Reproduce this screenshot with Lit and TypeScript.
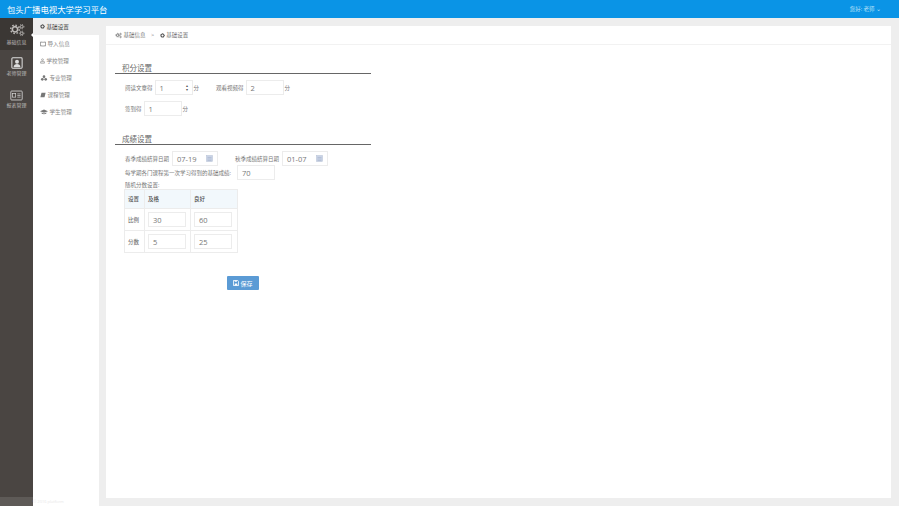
import { LitElement, html, css, svg } from "lit";
import { customElement } from "lit/decorators.js";

const gear = (s: number, c: string) => svg`<svg width=${s} height=${s} viewBox="0 0 16 16"><circle cx="8" cy="8" r="4.6" fill="none" stroke=${c} stroke-width="3"/><circle cx="8" cy="8" r="6.4" fill="none" stroke=${c} stroke-width="1.8" stroke-dasharray="2.5 2.5"/></svg>`;
const gears = (s: number, c: string) => svg`<svg width=${s} height=${s} viewBox="0 0 24 20"><g fill="none" stroke=${c}><circle cx="9" cy="9" r="4" stroke-width="2.4"/><circle cx="9" cy="9" r="6.4" stroke-width="2" stroke-dasharray="2.4 2.6"/><circle cx="19" cy="5" r="2" stroke-width="1.4"/><circle cx="19" cy="5" r="3.4" stroke-width="1.2" stroke-dasharray="1.5 1.5"/><circle cx="19" cy="15" r="2" stroke-width="1.4"/><circle cx="19" cy="15" r="3.4" stroke-width="1.2" stroke-dasharray="1.5 1.5"/></g></svg>`;
const c = "#777";
const menuIcons = [
  gear(5, "#333"),
  svg`<svg width="6" height="6" viewBox="0 0 16 16"><path d="M1 3h6l1 1 1-1h6v10H9l-1 1-1-1H1z" fill="none" stroke=${c} stroke-width="2"/></svg>`,
  svg`<svg width="5" height="6" viewBox="0 0 16 16"><path d="M8 1a3 3 0 1 1 0 6 3 3 0 0 1 0-6zM2 15V10h12v5z" fill="none" stroke=${c} stroke-width="1.800"/></svg>`,
  svg`<svg width="8" height="6" viewBox="0 0 18 16"><g fill=${c}><circle cx="9" cy="4.500" r="3.600"/><circle cx="4.500" cy="11.500" r="3.600"/><circle cx="13.500" cy="11.500" r="3.600"/></g></svg>`,
  svg`<svg width="6" height="6" viewBox="0 0 16 16"><path d="M4 2h11l-3 12H1z" fill=${c}/></svg>`,
  svg`<svg width="8" height="6" viewBox="0 0 20 14"><path d="M10 1 20 5 10 9 0 5z" fill=${c}/><path d="M4 8v3c3 2.500 9 2.500 12 0V8l-6 2.500z" fill=${c}/></svg>`,
];
const menu = ["基础设置", "导入信息", "学校管理", "专业管理", "课程管理", "学生管理"];
const cal = svg`<svg width="7" height="7" viewBox="0 0 14 14"><rect x="1" y="1" width="12" height="12" fill="#c9d3e6" stroke="#b4bfd3"/><path d="M3 5h8M3 8h8M3 11h8" stroke="#a0adc6"/></svg>`;

@customElement("app-root")
export class AppRoot extends LitElement {
  static styles = css`
    :host { display: block; width: 899px; height: 506px; overflow: hidden; position: relative; background: #eee; color: #777;
      font-family: "Open Sans", "Noto Sans CJK SC", sans-serif; font-size: 5.5px; }
    .top { height: 18px; background: #0a94e6; color: #fff; display: flex; align-items: center; justify-content: space-between; padding: 0 18px 0 7px; }
    .title { font-size: 8.4px; font-family: "Noto Sans CJK SC", sans-serif; }
    .user { font-size: 5.5px; color: #bfe2f8; }
    .body { display: flex; height: 488px; }
    .rail { width: 33px; background: #4a4542; color: #bdbab8; position: relative; }
    .ri { box-sizing: border-box; height: 33px; padding-bottom: 1px; display: flex; flex-direction: column; align-items: center; justify-content: center; gap: 1px; font-size: 5px; line-height: 6px; }
    .ri.on { background: #3b3734; height: 32px; }
    .ri.on::after { content: ""; position: absolute; right: 0; top: 15px; border: 2px solid transparent; border-right-color: #fff; }
    .side { width: 66px; background: #fff; }
    .mi { height: 17px; display: flex; align-items: center; gap: 1.500px; padding-left: 7px; font-size: 5.6px; color: #888; }
    .mi svg { flex: none; }
    .mi.on { background: #eee; color: #444; }
    .main { flex: 1; padding: 8px 8px 8px 7px; }
    .card { background: #fff; height: 472px; }
    .crumb { height: 18px; border-bottom: 1px solid #f2f2f2; display: flex; align-items: center; padding-left: 9px; gap: 1.500px; font-size: 5.500px; color: #777; line-height: 8px; }
    .sep { margin: 0 4px; }
    .form { padding: 0 0 0 9px; }
    .sec { width: 249px; border-bottom: 1px solid #666; height: 11px; padding-left: 7px; font-size: 7.500px; line-height: 13px; color: #666; }
    .s1 { margin-top: 17px; }
    .s2 { margin-top: 17px; }
    .row { display: flex; align-items: center; padding-left: 10px; }
    .lab { margin-right: 2px; white-space: nowrap; }
    .inp { box-sizing: border-box; width: 38px; height: 15px; border: 1px solid #ececec; display: flex; align-items: center; justify-content: space-between; padding: 0 4px; font-size: 7.500px; color: #777; flex: none; }
    .date { width: 46px; }
    .u { margin-left: 1px; }
    .spin { font-size: 4px; line-height: 4px; color: #555; display: flex; flex-direction: column; }
    .t { margin: 0 0 0 9px; border-collapse: collapse; table-layout: fixed; width: 113px; }
    .t td, .t th { border: 1px solid #ececec; padding: 0; font-weight: 500; text-align: left; font-size: 5.500px; }
    .t th { height: 18px; background: #f2f8fc; color: #555; padding-left: 3px; }
    .t td { height: 21px; padding-left: 3px; }
    .btn { margin: 23px 0 0 112px; width: 32px; height: 14px; background: #5b9bd5; color: #fff; font-size: 6px; display: flex; align-items: center; justify-content: center; gap: 1px; border-radius: 1px; }
    .foot { position: absolute; left: 0; bottom: 0; width: 33px; height: 9px; background: #5e5a57; }
    .foot2 { position: absolute; left: 33px; bottom: 0; height: 9px; line-height: 9px; font-size: 4px; color: #e8e8e8; }
  `;

  render() {
    return html`
      <div class="top"><span class="title">包头广播电视大学学习平台</span><span class="user">您好: 老师 ⌄</span></div>
      <div class="body">
        <div class="rail">
          <div class="ri on">${gears(16, "#bdbab8")}<span>基础信息</span></div>
          <div class="ri"><svg width="12" height="12" viewBox="0 0 14 14"><rect x="1" y="1" width="12" height="12" rx="1" fill="none" stroke="#ddd" stroke-width="1.200"/><circle cx="7" cy="5.500" r="2.300" fill="#ddd"/><path d="M3 12c0-5 8-5 8 0z" fill="#ddd"/></svg><span>老师管理</span></div>
          <div class="ri"><svg width="13" height="11" viewBox="0 0 16 13"><rect x="1" y="1" width="14" height="11" rx="1" fill="none" stroke="#ddd"/><rect x="3" y="4" width="4" height="4.500" fill="none" stroke="#ddd" stroke-width=".8"/><path d="M9 4.500h4M9 6.500h4M9 8.500h4" stroke="#ddd" stroke-width=".8"/></svg><span>报表管理</span></div>
          <div class="foot"></div>
        </div>
        <div class="side">
          ${menu.map((m, i) => html`<div class="mi ${i === 0 ? "on" : ""}">${menuIcons[i]}<span>${m}</span></div>`)}
        </div>
        <div class="main"><div class="card">
          <div class="crumb">${gears(7, "#555")}<span>基础信息</span><span class="sep">&gt;</span>${gear(5, "#333")}<span>基础设置</span></div>
          <div class="form">
            <div class="sec s1">积分设置</div>
            <div class="row" style="margin-top:6px">
              <span class="lab">阅读文章得</span><span class="inp"><span>1</span><span class="spin"><span>▴</span><span>▾</span></span></span><span class="u">分</span>
              <span class="lab" style="margin-left:17px">观看视频得</span><span class="inp"><span>2</span></span><span class="u">分</span>
            </div>
            <div class="row" style="margin-top:6px">
              <span class="lab">签到得</span><span class="inp"><span>1</span></span><span class="u">分</span>
            </div>
            <div class="sec s2">成绩设置</div>
            <div class="row" style="margin-top:6px">
              <span class="lab" style="margin-right:3px">春季成绩结算日期</span><span class="inp date"><span>07-19</span>${cal}</span>
              <span class="lab" style="margin-left:17px;margin-right:3px">秋季成绩结算日期</span><span class="inp date"><span>01-07</span>${cal}</span>
            </div>
            <div class="row" style="margin-top:-1px">
              <span class="lab" style="margin-right:6px">每学期各门课程第一次学习得到的基础成绩:</span><span class="inp"><span>70</span></span>
            </div>
            <div class="row" style="height:9px">随机分数设置:</div>
            <table class="t">
              <colgroup><col style="width:20px"/><col style="width:46px"/><col style="width:47px"/></colgroup>
              <tr><th>设置</th><th>及格</th><th>良好</th></tr>
              <tr><td>比例</td><td><span class="inp"><span>30</span></span></td><td><span class="inp"><span>60</span></span></td></tr>
              <tr><td>分数</td><td><span class="inp"><span>5</span></span></td><td><span class="inp"><span>25</span></span></td></tr>
            </table>
            <div class="btn"><svg width="6" height="6" viewBox="0 0 14 14"><path d="M1 1h10l2 2v10H1z" fill="none" stroke="#fff" stroke-width="2"/><path d="M4 8h6v5H4zM4 1h5v3H4z" fill="#fff"/></svg><span>保存</span></div>
          </div>
        </div></div>
      </div>
      <div class="foot2">© 2016 platform</div>
    `;
  }
}
